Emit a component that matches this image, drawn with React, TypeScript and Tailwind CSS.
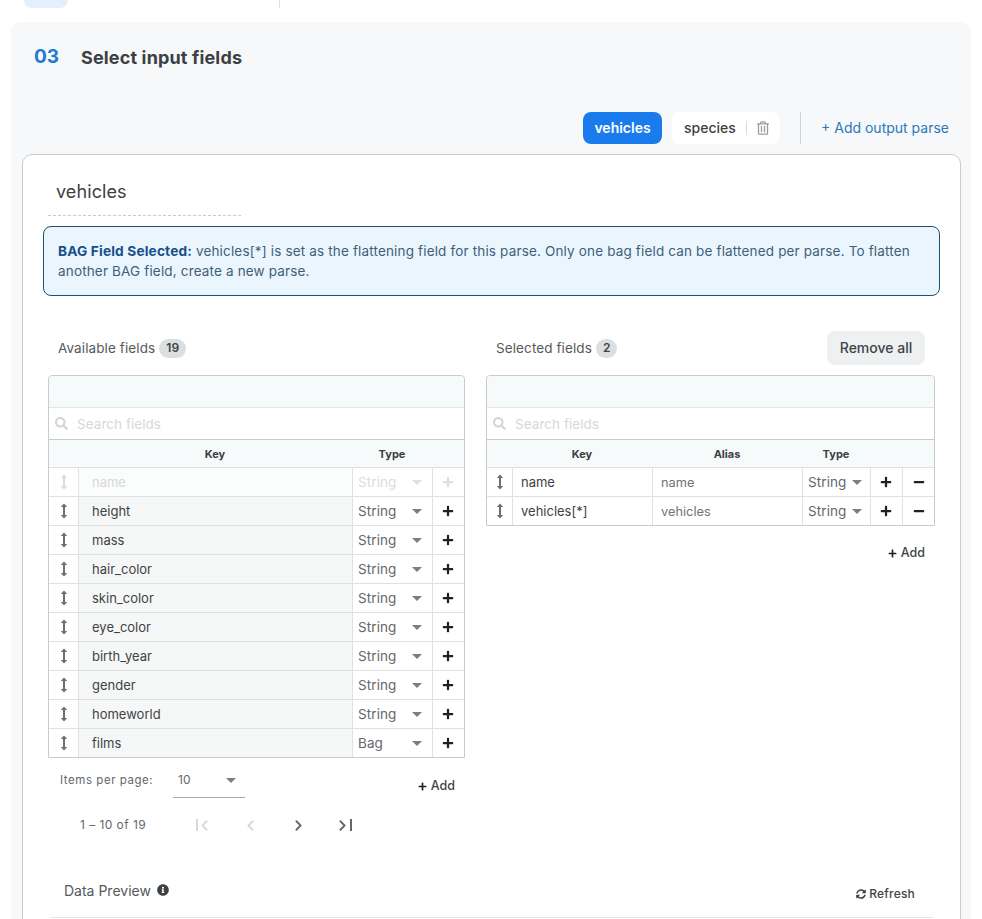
import React from "react";
import { FaPlus, FaMinus, FaSearch, FaInfoCircle, FaSyncAlt, FaRegTrashAlt } from "react-icons/fa";
import { ChevronLeft, ChevronRight } from "lucide-react";

const font = { fontFamily: "Inter, 'Liberation Sans', sans-serif" };

function Handle({ muted }: { muted?: boolean }) {
  return (
    <svg width="8" height="16" viewBox="0 0 8 16" className={muted ? "text-[#d8dadb]" : "text-[#6b6f72]"}>
      <path d="M4 0.5 L7.2 4 H5 V12 H7.2 L4 15.5 L0.8 12 H3 V4 H0.8 Z" fill="currentColor" />
    </svg>
  );
}

function Caret({ muted }: { muted?: boolean }) {
  return (
    <svg width="10" height="5" viewBox="0 0 10 5" className={muted ? "text-[#dedfe0]" : "text-[#7b7f82]"}>
      <path d="M0 0 H10 L5 5 Z" fill="currentColor" />
    </svg>
  );
}

function SearchRow() {
  return (
    <div className="flex h-[32px] items-center border-b border-[#c9cccd] bg-white pl-[6px] pr-2">
      <FaSearch className="h-[13px] w-[13px] text-[#d3d5d6]" />
      <span className="ml-[9px] pt-[2px] text-[13.5px] tracking-[0.05px] text-[#d6d8d9]">Search fields</span>
    </div>
  );
}

const leftRows: [string, string][] = [
  ["height", "String"],
  ["mass", "String"],
  ["hair_color", "String"],
  ["skin_color", "String"],
  ["eye_color", "String"],
  ["birth_year", "String"],
  ["gender", "String"],
  ["homeworld", "String"],
  ["films", "Bag"],
];

function LeftRow({ name, type, muted }: { name: string; type: string; muted?: boolean }) {
  return (
    <div className="grid h-[29px] grid-cols-[29px_274px_80px_1fr] border-t border-[#dfe1e2]">
      <div className="flex items-center justify-center">
        <Handle muted={muted} />
      </div>
      <div
        className={`flex items-center border-l border-[#dfe1e2] pl-[13px] pt-[2px] text-[13px] ${
          muted ? "bg-[#fbfcfc] text-[#d6d8d9]" : "bg-[#f6f7f7] text-[#3f4345]"
        }`}
      >
        {name}
      </div>
      <div
        className={`flex items-center justify-between border-l border-[#dfe1e2] pl-[5px] pr-[10px] text-[13.5px] tracking-[0.1px] ${
          muted ? "text-[#dadcdd]" : "text-[#64686b]"
        }`}
      >
        <span>{type}</span>
        <Caret muted={muted} />
      </div>
      <div className="flex items-center justify-center border-l border-[#dfe1e2] pr-[1px]">
        <FaPlus className={`h-[12px] w-[12px] ${muted ? "text-[#dcdedf]" : "text-[#1f2224]"}`} />
      </div>
    </div>
  );
}

function RightRow({ name, alias }: { name: string; alias: string }) {
  return (
    <div className="grid h-[29px] grid-cols-[25px_140px_150px_68px_32px_1fr] border-t border-[#dfe1e2]">
      <div className="flex items-center justify-center">
        <Handle />
      </div>
      <div className="flex items-center border-l border-[#dfe1e2] pl-[8px] pt-[2px] text-[13px] text-[#3f4345]">{name}</div>
      <div className="flex items-center border-l border-[#dfe1e2] pl-[8px] pt-[2px] text-[12.8px] text-[#707477]">{alias}</div>
      <div className="flex items-center justify-between border-l border-[#dfe1e2] pl-[5px] pr-[8px] text-[13.5px] tracking-[0.1px] text-[#64686b]">
        <span>String</span>
        <Caret />
      </div>
      <div className="flex items-center justify-center border-l border-[#dfe1e2] pr-[1px]">
        <FaPlus className="h-[12px] w-[12px] text-[#1f2224]" />
      </div>
      <div className="flex items-center justify-center border-l border-[#dfe1e2]">
        <FaMinus className="h-[12px] w-[12px] text-[#1f2224]" />
      </div>
    </div>
  );
}

function Count({ n }: { n: string }) {
  return (
    <span className="ml-[4px] flex h-[19px] items-center rounded-full bg-[#dcdfe0] px-[7px] text-[12px] font-semibold text-[#3f4345]">
      {n}
    </span>
  );
}

function AddLink() {
  return (
    <span className="flex items-center gap-[4px] text-[12.5px] font-medium text-[#3f4345]">
      <FaPlus className="h-[9px] w-[9px] text-[#1f2224]" />
      Add
    </span>
  );
}

export default function App() {
  return (
    <div className="h-[919px] w-[982px] overflow-hidden bg-white" style={font}>
      <div className="flex h-[22px] items-start">
        <div className="ml-[24px] h-[8px] w-[44px] rounded-b-[8px] bg-[#e3effc]" />
        <div className="ml-[211px] h-[8px] w-px bg-[#dfe1e2]" />
      </div>

      <div className="ml-[11px] h-[897px] w-[960px] rounded-t-[10px] bg-[#f6f8f9] pl-[11px] pr-[10px]">
        <div className="flex h-[70px] items-center pl-[12px]">
          <span className="w-[47px] text-[19px] font-bold text-[#1f7bd0]">03</span>
          <span className="text-[18px] font-bold tracking-[0.15px] text-[#3c4043]">Select input fields</span>
        </div>

        <div className="mt-[20px] flex h-[32px] items-stretch justify-end pr-[12px]">
          <div className="flex w-[79px] items-center justify-center rounded-[8px] bg-[#1a7cec] pb-[1px] text-[14px] font-semibold text-white">
            vehicles
          </div>
          <div className="ml-[10px] flex w-[108px] items-center rounded-[8px] bg-white pb-[1px] pl-[12px] text-[14px] font-medium text-[#3c4043]">
            species
            <span className="ml-[10px] h-[14px] w-px bg-[#dcdfe0]" />
            <FaRegTrashAlt className="ml-[10px] h-[14px] w-[12px] text-[#9a9da0]" />
          </div>
          <div className="ml-[20px] w-px bg-[#cfd2d4]" />
          <div className="ml-[20px] flex items-center pb-[1px] text-[14px] text-[#2a79bd]">+ Add output parse</div>
        </div>

        <div className="mt-[10px] h-[800px] rounded-t-[10px] border border-[#c9cccd] bg-white px-[20px]">
          <div className="ml-[5px] h-[61px] w-[193px] border-b border-dashed border-[#c9cccd] pl-[8px] pt-[24px] text-[18px] leading-[26px] tracking-[0.1px] text-[#3c4043]">
            vehicles
          </div>

          <div className="mt-[10px] h-[70px] rounded-[8px] border border-[#1d5273] bg-[#ebf5fe] px-[14px] py-[14px] text-[13.5px] leading-[20px] tracking-[0.16px] text-[#3f5f78]">
            <b className="text-[13.7px] font-bold text-[#17508a]">BAG Field Selected:</b> vehicles[*] is set as the flattening field for this parse. Only one bag field can be flattened per parse. To flatten another BAG field, create a new parse.
          </div>

          <div className="mt-[35px] grid grid-cols-[417px_449px] gap-x-[21px] px-[5px]">
            <div>
              <div className="flex h-[34px] items-center pl-[10px] text-[13.5px] tracking-[0.1px] text-[#55595c]">
                Available fields
                <Count n="19" />
              </div>
              <div className="mt-[10px] rounded-t-[4px] border border-[#c9cccd]">
                <div className="h-[32px] rounded-t-[4px] border-b border-[#e3e5e6] bg-[#f7fafa]" />
                <SearchRow />
                <div className="grid h-[27px] grid-cols-[29px_274px_80px_1fr] items-center bg-[#f7fafa] pt-[2px] text-center text-[11px] font-bold text-[#3c4043]">
                  <span />
                  <span>Key</span>
                  <span>Type</span>
                  <span />
                </div>
                <LeftRow name="name" type="String" muted />
                {leftRows.map(([n, t]) => (
                  <LeftRow key={n} name={n} type={t} />
                ))}
              </div>

              <div className="relative h-[40px] pl-[12px]">
                <div className="flex h-[40px] items-center">
                  <span className="w-[113px] pt-[5px] text-[11.5px] tracking-[0.55px] text-[#64686b]">Items per page:</span>
                  <div className="flex h-[40px] w-[72px] items-center justify-between border-b border-[#a9acae] pl-[5px] pr-[9px] pt-[5px] text-[12px] text-[#64686b]">
                    10
                    <Caret />
                  </div>
                </div>
                <div className="absolute right-[10px] top-[19px]">
                  <AddLink />
                </div>
              </div>

              <div className="mt-[11px] flex h-[32px] items-center pl-[32px] text-[12px] tracking-[0.45px] text-[#64686b]">
                <span className="w-[116px]">1 – 10 of 19</span>
                <span className="flex w-[46px] items-center justify-start text-[#d6d8d9]">
                  <span className="h-[12px] w-[1.5px] bg-[#d6d8d9]" />
                  <ChevronLeft strokeWidth={2.6} className="-ml-[2px] h-[17px] w-[17px]" />
                </span>
                <span className="flex w-[48px] items-center text-[#d6d8d9]">
                  <ChevronLeft strokeWidth={2.6} className="h-[17px] w-[17px]" />
                </span>
                <span className="flex w-[44px] items-center text-[#64686b]">
                  <ChevronRight strokeWidth={2.6} className="h-[17px] w-[17px]" />
                </span>
                <span className="flex items-center text-[#64686b]">
                  <ChevronRight strokeWidth={2.6} className="-mr-[1px] h-[17px] w-[17px]" />
                  <span className="h-[12px] w-[1.5px] bg-[#64686b]" />
                </span>
              </div>
            </div>

            <div>
              <div className="flex h-[34px] items-center justify-between">
                <div className="flex items-center pl-[10px] text-[13.5px] tracking-[0.1px] text-[#55595c]">
                  Selected fields
                  <Count n="2" />
                </div>
                <div className="mr-[10px] flex h-[34px] w-[98px] items-center justify-center rounded-[8px] bg-[#eef0f1] pb-[1px] text-[14px] font-medium text-[#3f4345]">
                  Remove all
                </div>
              </div>
              <div className="mt-[10px] rounded-t-[4px] border border-[#c9cccd]">
                <div className="h-[32px] rounded-t-[4px] border-b border-[#e3e5e6] bg-[#f7fafa]" />
                <SearchRow />
                <div className="grid h-[27px] grid-cols-[25px_140px_150px_68px_32px_1fr] items-center bg-[#f7fafa] pt-[2px] text-center text-[11px] font-bold text-[#3c4043]">
                  <span />
                  <span>Key</span>
                  <span>Alias</span>
                  <span>Type</span>
                  <span />
                  <span />
                </div>
                <RightRow name="name" alias="name" />
                <RightRow name="vehicles[*]" alias="vehicles" />
              </div>
              <div className="mr-[10px] mt-[18px] flex justify-end">
                <AddLink />
              </div>
            </div>
          </div>

          <div className="mt-[31px] flex h-[36px] items-center justify-between px-[21px]">
            <div className="flex items-center gap-[6px] text-[14px] text-[#55595c]">
              Data Preview
              <FaInfoCircle className="h-[12px] w-[12px] text-[#3c4043]" />
            </div>
            <div className="mr-[4px] mt-[8px] flex items-center gap-[3px] text-[12px] font-medium tracking-[0.2px] text-[#3f4345]">
              <FaSyncAlt className="h-[10px] w-[10px]" />
              Refresh
            </div>
          </div>
          <div className="mx-[7px] mt-[9px] h-px bg-[#e3e5e6]" />
        </div>
      </div>
    </div>
  );
}
